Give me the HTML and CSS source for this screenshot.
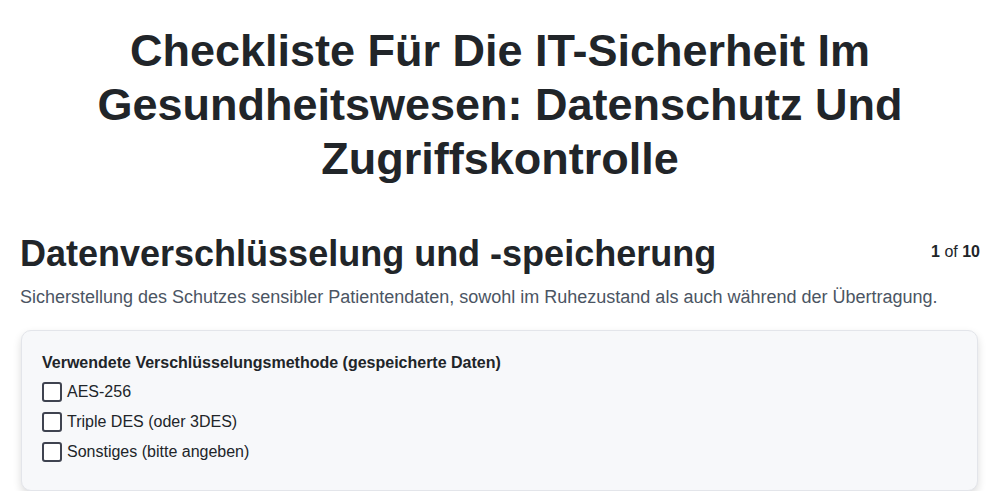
FILE: index.html
```html
<!DOCTYPE html>
<html lang="de">
<head>
<meta charset="utf-8">
<title>Checkliste</title>
<link rel="stylesheet" href="styles.css">
</head>
<body>
<div class="page">
  <h1 class="title">Checkliste Für Die IT-Sicherheit Im Gesundheitswesen: Datenschutz Und Zugriffskontrolle</h1>
  <section class="section">
    <div class="section-head">
      <h2 class="section-title">Datenverschlüsselung und -speicherung</h2>
      <div class="pager"><b>1</b> of <b>10</b></div>
    </div>
    <p class="section-desc">Sicherstellung des Schutzes sensibler Patientendaten, sowohl im Ruhezustand als auch während der Übertragung.</p>
    <div class="card">
      <div class="question">Verwendete Verschlüsselungsmethode (gespeicherte Daten)</div>
      <label class="option"><span class="box"></span><span>AES-256</span></label>
      <label class="option"><span class="box"></span><span>Triple DES (oder 3DES)</span></label>
      <label class="option"><span class="box"></span><span>Sonstiges (bitte angeben)</span></label>
    </div>
  </section>
</div>
</body>
</html>
```

FILE: styles.css
```css
* { box-sizing: border-box; }
html, body { margin: 0; padding: 0; background: #ffffff; }
body {
  font-family: "Liberation Sans", Arial, sans-serif;
  color: #212529;
}
.page {
  padding: 24px 20px 0 20px;
}
.title {
  margin: 0 auto;
  max-width: 840px;
  text-align: center;
  font-size: 45px;
  line-height: 54px;
  font-weight: 700;
  color: #212529;
}
.section {
  margin-top: 46px;
}
.section-head {
  display: flex;
  justify-content: space-between;
  align-items: flex-start;
}
.section-title {
  margin: 0;
  font-size: 36px;
  line-height: 43px;
  font-weight: 700;
}
.pager {
  font-size: 16px;
  margin-top: 11px;
  color: #212529;
}
.section-desc {
  margin: 9px 0 0 0;
  font-size: 18px;
  line-height: 27px;
  color: #4b5563;
}
.card {
  margin: 19px 2px 0 1px;
  background: #f7f8fa;
  border: 1px solid #e3e5ea;
  border-radius: 10px;
  box-shadow: 0 4px 8px rgba(0, 0, 0, 0.14);
  padding: 20px 20px 23px 20px;
}
.question {
  font-size: 16px;
  font-weight: 700;
  line-height: 24px;
  margin-bottom: 2px;
}
.option {
  display: flex;
  align-items: center;
  gap: 5px;
  height: 30px;
  font-size: 16px;
  color: #212529;
}
.box {
  width: 20px;
  height: 20px;
  border: 2px solid #3f4350;
  border-radius: 3px;
  background: #ffffff;
  flex: none;
}
```
